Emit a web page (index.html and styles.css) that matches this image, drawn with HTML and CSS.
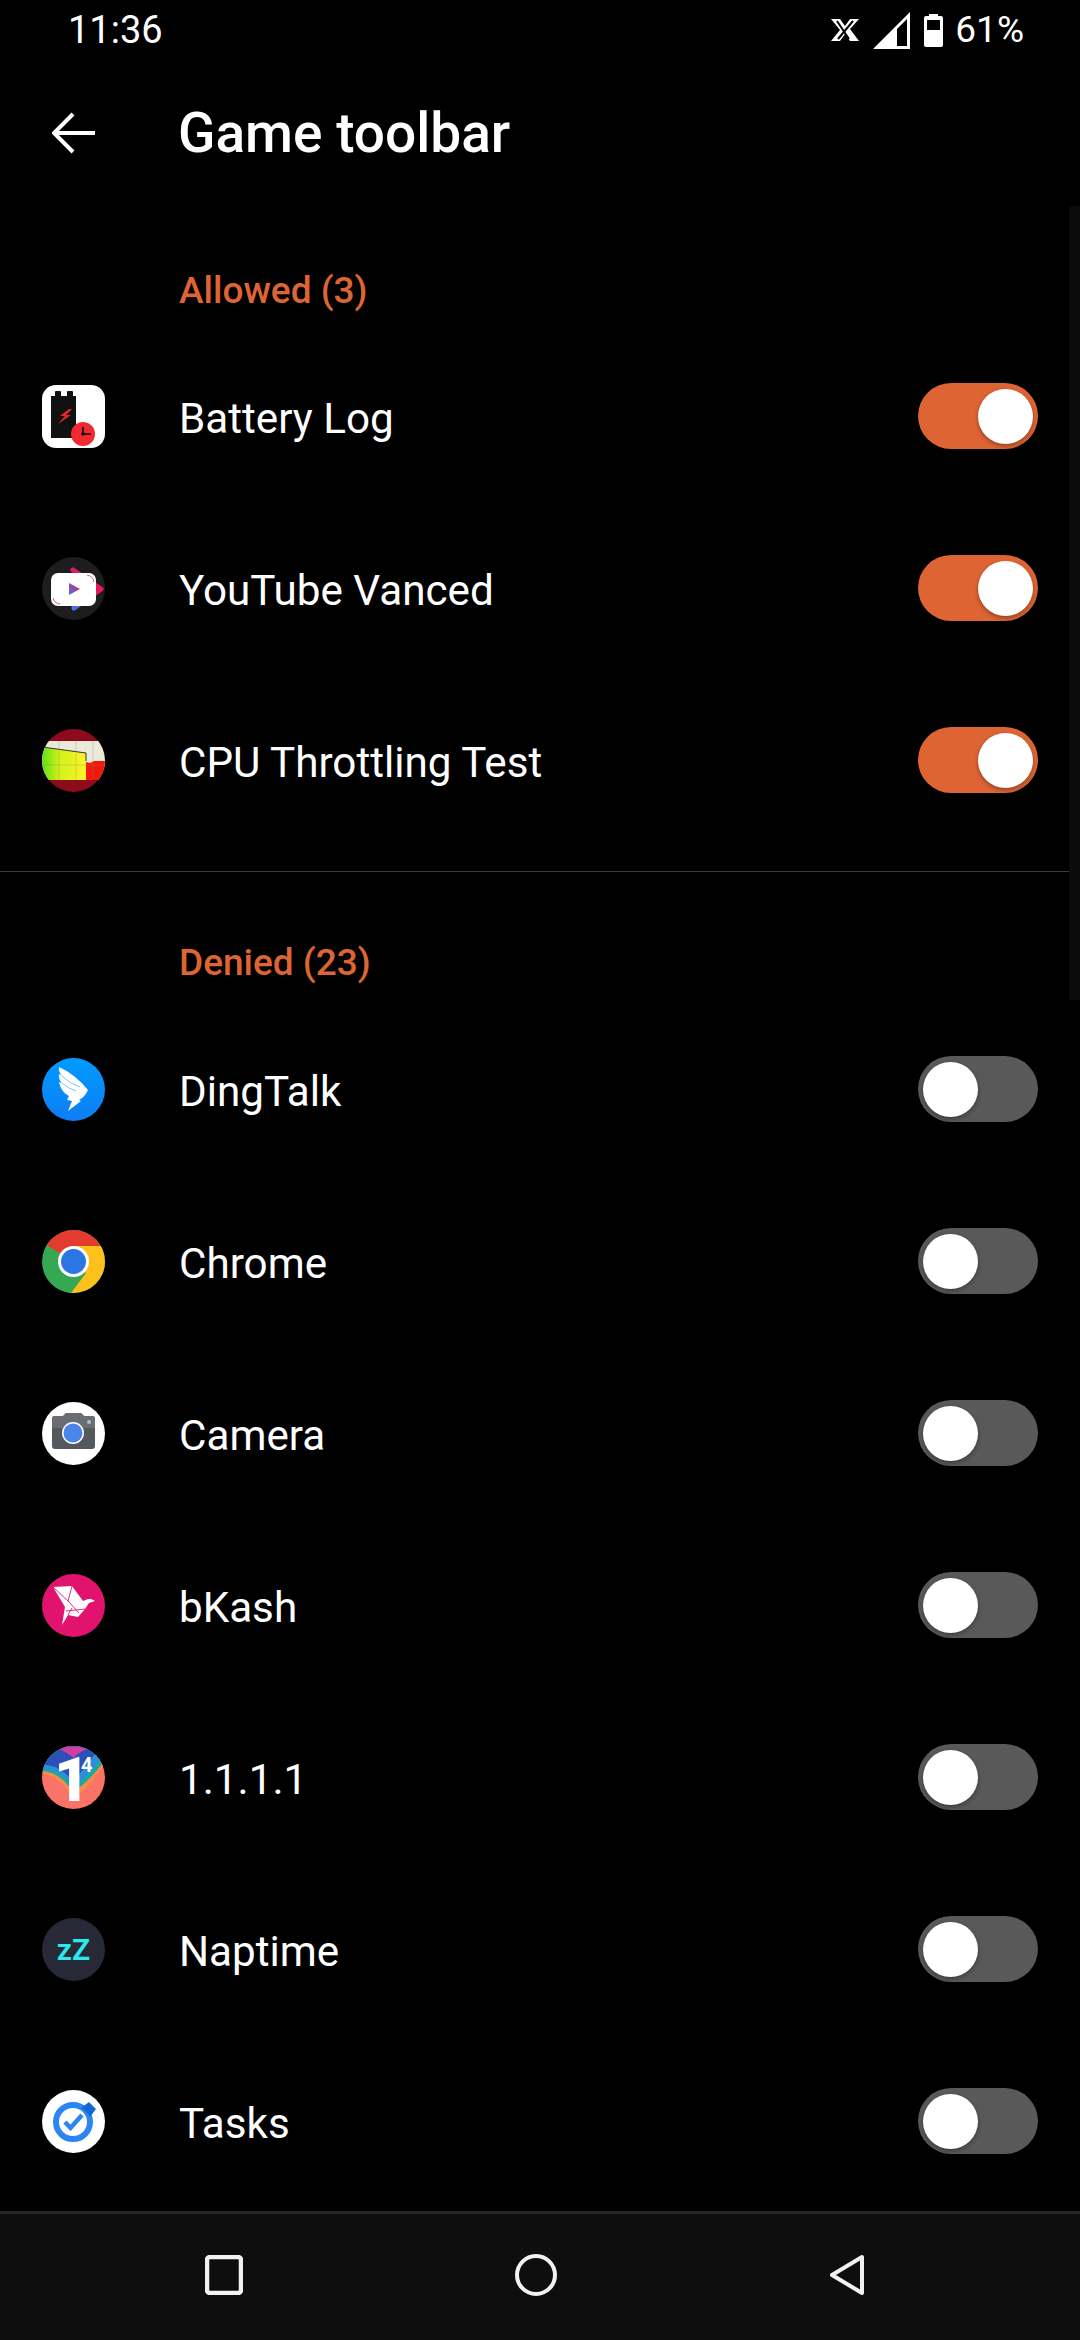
FILE: index.html
```html
<!DOCTYPE html>
<html lang="en">
<head>
  <meta charset="UTF-8">
  <title>Game toolbar</title>
  <meta name="viewport" content="width=device-width, initial-scale=1.0">
  <link rel="stylesheet" href="styles.css">
</head>
<body>
  <div class="phone">
    <div class="status-bar">
      <span class="clock">11:36</span>
      <div class="status-icons">
        <svg class="st-x" width="30" height="24" viewBox="0 0 30 24">
          <path d="M1 1h9l5 7 5-7h9l-9 10 9 12h-9l-5-7-5 7H1l9-11z" fill="#fff"/>
          <path d="M7 3l12 18M23 3L8 21" stroke="#000" stroke-width="2" fill="none"/>
        </svg>
        <svg class="st-signal" width="38" height="37" viewBox="0 0 38 37">
          <path d="M37 0v37H0z" fill="#fff"/>
          <path d="M24 17l10-10v27H24z" fill="#000"/>
        </svg>
        <svg class="st-battery" width="19" height="34" viewBox="0 0 19 34">
          <path d="M5 3V1h9v2h3a2 2 0 0 1 2 2v27a2 2 0 0 1-2 2H2a2 2 0 0 1-2-2V5a2 2 0 0 1 2-2z" fill="#fff"/>
          <rect x="3" y="7" width="13" height="10" fill="#000"/>
        </svg>
        <span class="pct">61%</span>
      </div>
    </div>

    <header class="app-bar">
      <svg class="back" width="44" height="42" viewBox="0 0 44 42">
        <path d="M43 21H3M21 2L2 21l19 19" stroke="#fff" stroke-width="4" fill="none"/>
      </svg>
      <h1>Game toolbar</h1>
    </header>

    <main class="list">
      <div class="scroll-thumb"></div>
      <h2 class="section-title allowed-title">Allowed (3)</h2>

      <div class="row">
        <svg class="app-icon" viewBox="0 0 63 63">
          <rect width="63" height="63" rx="14" fill="#fff"/>
          <path d="M13 11V7a1 1 0 0 1 1-1h4a1 1 0 0 1 1 1v4h6V7a1 1 0 0 1 1-1h4a1 1 0 0 1 1 1v4h3v42H9V11z" fill="#111"/>
          <path d="M27 24l-9 7h5l-7 8 13-9h-5l6-6z" fill="#e8262c"/>
          <circle cx="41" cy="49" r="12" fill="#f02a2e"/>
          <path d="M41 42v7h8" stroke="#111" stroke-width="1.6" fill="none"/>
          <circle cx="41" cy="49" r="1.8" fill="#111"/>
        </svg>
        <span class="app-name">Battery Log</span>
        <span class="switch on"><span class="knob"></span></span>
      </div>
      <div class="row">
        <svg class="app-icon" viewBox="0 0 63 63">
          <defs>
            <linearGradient id="vancedGrad" gradientUnits="userSpaceOnUse" x1="31" y1="52" x2="52" y2="30">
              <stop offset="0" stop-color="#3f7de8"/>
              <stop offset="0.5" stop-color="#a5369a"/>
              <stop offset="1" stop-color="#e5185a"/>
            </linearGradient>
            <linearGradient id="vancedPlay" x1="0" y1="1" x2="1" y2="0">
              <stop offset="0" stop-color="#3f7de8"/>
              <stop offset="1" stop-color="#e5185a"/>
            </linearGradient>
          </defs>
          <circle cx="31.5" cy="31.5" r="31.5" fill="#1d1d20"/>
          <path d="M31 13l28 19-27 19" stroke="url(#vancedGrad)" stroke-width="5" stroke-linecap="round" stroke-linejoin="round" fill="none"/>
          <rect x="9" y="16" width="45" height="33" rx="7" fill="#fff"/>
          <path d="M27 26l11 6-11 6z" fill="url(#vancedPlay)"/>
          <path d="M45 18q6 1 7 7M11 41q1 5 7 6" stroke="#d8336e" stroke-width="0.8" fill="none"/>
        </svg>
        <span class="app-name">YouTube Vanced</span>
        <span class="switch on"><span class="knob"></span></span>
      </div>
      <div class="row">
        <svg class="app-icon" viewBox="0 0 63 63">
          <defs>
            <clipPath id="cpuClip"><circle cx="31.5" cy="31.5" r="31.5"/></clipPath>
            <linearGradient id="cpuGreen" x1="0" y1="0" x2="1" y2="0">
              <stop offset="0" stop-color="#5fe01a"/>
              <stop offset="0.4" stop-color="#d2f21a"/>
              <stop offset="1" stop-color="#fdf42a"/>
            </linearGradient>
          </defs>
          <g clip-path="url(#cpuClip)">
            <rect width="63" height="63" fill="#8c0b1c"/>
            <rect y="12" width="63" height="39" fill="#ece9d8"/>
            <path d="M0 18l44 6v27H0z" fill="url(#cpuGreen)"/>
            <path d="M44 33l4 1 4-2 11 0v19H44z" fill="#f21a0a"/>
            <path d="M0 18l44 6v8" stroke="#333" stroke-width="1" fill="none"/>
            <path d="M17 12v39M34 12v39M51 12v39M0 36h63" stroke="#8a8a60" stroke-width="0.5" opacity="0.6"/>
          </g>
        </svg>
        <span class="app-name">CPU Throttling Test</span>
        <span class="switch on"><span class="knob"></span></span>
      </div>

      <hr class="divider">

      <h2 class="section-title denied-title">Denied (23)</h2>

      <div class="row">
        <svg class="app-icon" viewBox="0 0 63 63">
          <defs>
            <linearGradient id="dingGrad" x1="0" y1="0" x2="0" y2="1">
              <stop offset="0" stop-color="#009cff"/>
              <stop offset="1" stop-color="#0d7df5"/>
            </linearGradient>
          </defs>
          <circle cx="31.5" cy="31.5" r="31.5" fill="url(#dingGrad)"/>
          <path d="M17 9Q33 16 46 32 43 39 37 42l2 1-13 10 4-10-5-1 2-4Q19 34 17 24l3 1Q16 21 17 16l3 2Q16 13 17 9z" fill="#fff"/>
          <path d="M20 18q8 8 18 11M20 25q7 6 14 8" stroke="#6dbdfc" stroke-width="0.9" fill="none"/>
        </svg>
        <span class="app-name">DingTalk</span>
        <span class="switch"><span class="knob"></span></span>
      </div>
      <div class="row">
        <svg class="app-icon" viewBox="0 0 63 63">
          <defs><clipPath id="chromeClip"><circle cx="31.5" cy="31.5" r="31.5"/></clipPath></defs>
          <g clip-path="url(#chromeClip)">
            <rect width="63" height="63" fill="#34a853"/>
            <path d="M31.5 31.5L4 15V-2h59v18H31.5z" fill="#e33b2e"/>
            <path d="M31.5 16H63v47H22z" fill="#fcc11a"/>
            <path d="M31.5 31.5L4 15 0 63h29l15-20z" fill="#34a853"/>
          </g>
          <circle cx="31.5" cy="31.5" r="15.5" fill="#fff"/>
          <circle cx="31.5" cy="31.5" r="12.5" fill="#2a76e4"/>
        </svg>
        <span class="app-name">Chrome</span>
        <span class="switch"><span class="knob"></span></span>
      </div>
      <div class="row">
        <svg class="app-icon" viewBox="0 0 63 63">
          <circle cx="31.5" cy="31.5" r="31.5" fill="#fff"/>
          <path d="M10 17a3 3 0 0 1 3-3h8l3-3h15l3 3h8a3 3 0 0 1 3 3v27a3 3 0 0 1-3 3H13a3 3 0 0 1-3-3z" fill="#55585d"/>
          <path d="M10 26v-9a3 3 0 0 1 3-3h8l3-3h15l3 3h8a3 3 0 0 1 3 3v9z" fill="#6a6d72"/>
          <circle cx="47" cy="20" r="2" fill="#b5b8bc"/>
          <circle cx="31" cy="31" r="11" fill="#fff"/>
          <circle cx="31" cy="31" r="9.500" fill="#4a86ea"/>
        </svg>
        <span class="app-name">Camera</span>
        <span class="switch"><span class="knob"></span></span>
      </div>
      <div class="row">
        <svg class="app-icon" viewBox="0 0 63 63">
          <circle cx="31.5" cy="31.5" r="31.5" fill="#e2136e"/>
          <path d="M11 13l19-1 11 15 5-2 3 0 4 2-6 2-4 6-7 8-10-2-6 10 3-18z" fill="#fff"/>
          <path d="M30 12l-4 15 11 12M26 27L11 13M24 37l19-2M26 41l4-7" stroke="#e2136e" stroke-width="0.9" fill="none"/>
        </svg>
        <span class="app-name">bKash</span>
        <span class="switch"><span class="knob"></span></span>
      </div>
      <div class="row">
        <div class="warp-icon">
          <svg class="app-icon" viewBox="0 0 63 63">
            <defs><clipPath id="warpClip"><circle cx="31.5" cy="31.5" r="31.5"/></clipPath></defs>
            <g clip-path="url(#warpClip)">
              <rect width="63" height="63" fill="#f97366"/>
              <path d="M36 63q18-4 27-22v22z" fill="#f9a62c"/>
              <path d="M0 28q18 2 31 24 19-12 32-34V0H0z" fill="#f98a4a"/>
              <path d="M0 25q18 1 31 21 17-11 32-32V0H0z" fill="#1aa7a5"/>
              <path d="M0 23q18-1 31 19 15-12 32-34V0H0z" fill="#2a8fdc"/>
              <path d="M0 19q18-1 31 17 13-16 25-32V0H0z" fill="#2d4fb8"/>
              <path d="M16 2q14-4 30 1-10 3-14 9-8-6-16-10z" fill="#d03ea0"/>
            </g>
          </svg>
          <span class="warp-one">1</span>
          <span class="warp-four">4</span>
        </div>
        <span class="app-name">1.1.1.1</span>
        <span class="switch"><span class="knob"></span></span>
      </div>
      <div class="row">
        <div class="nap-icon">zZ</div>
        <span class="app-name">Naptime</span>
        <span class="switch"><span class="knob"></span></span>
      </div>
      <div class="row">
        <svg class="app-icon" viewBox="0 0 63 63">
          <circle cx="31.5" cy="31.5" r="31.5" fill="#fff"/>
          <circle cx="31" cy="32" r="17" fill="none" stroke="#2b86f2" stroke-width="6"/>
          <path d="M23 32l5.500 6L40 25" stroke="#2b86f2" stroke-width="4.500" fill="none"/>
          <path d="M39 18l8-6 7 7-6 8q-3-6-9-9z" fill="#1667d6"/>
        </svg>
        <span class="app-name">Tasks</span>
        <span class="switch"><span class="knob"></span></span>
      </div>
    </main>

    <nav class="nav-bar">
      <svg width="38" height="40" viewBox="0 0 38 40">
        <rect x="2" y="2" width="34" height="36" rx="3" stroke="#f2f2f2" stroke-width="4.500" fill="none"/>
      </svg>
      <svg width="42" height="42" viewBox="0 0 42 42">
        <circle cx="21" cy="21" r="19" stroke="#f2f2f2" stroke-width="4" fill="none"/>
      </svg>
      <svg width="36" height="42" viewBox="0 0 36 42">
        <path d="M33 3v36L3 21z" stroke="#f2f2f2" stroke-width="4" stroke-linejoin="round" fill="none"/>
      </svg>
    </nav>
  </div>
</body>
</html>
```

FILE: styles.css
```css
* { box-sizing: border-box; }
html, body { margin: 0; padding: 0; background: #000; }
body { font-family: Roboto, "Noto Sans", sans-serif; color: #fff; }

.phone { width: 1080px; height: 2340px; display: flex; flex-direction: column; overflow: hidden; background: #000; }

.status-bar { height: 60px; flex: none; display: flex; align-items: center; justify-content: space-between; padding: 0 56px 0 68px; }
.clock { font-size: 38px; line-height: 60px; }
.status-icons { display: flex; align-items: center; }
.st-x { margin-right: 13px; }
.st-signal { margin-right: 13px; }
.st-battery { margin-right: 12px; }
.pct { font-size: 37px; line-height: 60px; }

.app-bar { height: 146px; flex: none; display: flex; align-items: center; padding-left: 52px; }
.app-bar h1 { margin: 0 0 0 82px; font-size: 55px; font-weight: 500; }

.list { flex: 1; min-height: 0; overflow: hidden; position: relative; }
.scroll-thumb { position: absolute; top: -6px; right: 0; width: 11px; height: 800px; background: #0b0b0b; }
.section-title { margin: 0; font-size: 37px; font-weight: 500; color: #de6433; padding-left: 179px; }
.allowed-title { height: 124px; line-height: 170px; }
.denied-title { height: 131px; line-height: 182px; }

.row { height: 172px; display: flex; align-items: center; padding: 0 42px; }
.app-icon { width: 63px; height: 63px; flex: none; display: block; }
.app-name { flex: 1; margin-left: 74px; font-size: 42.2px; position: relative; top: 2px; }

.switch { width: 120px; height: 66px; flex: none; border-radius: 33px; background: #595959; display: flex; align-items: center; padding: 0 5px; }
.switch.on { background: #de6433; justify-content: flex-end; }
.knob { width: 55px; height: 55px; border-radius: 50%; background: #fff; box-shadow: 0 2px 4px rgba(0, 0, 0, 0.35); }

.divider { height: 1px; margin: 25px 0 0; border: none; background: #3a3a3a; }

.warp-icon { width: 63px; height: 63px; flex: none; position: relative; color: #fff; }
.warp-one { position: absolute; left: 12px; top: 11px; font-size: 62px; line-height: 46px; font-weight: 900; letter-spacing: -11px; }
.warp-four { position: absolute; left: 39px; top: 9px; font-size: 20px; line-height: 20px; font-weight: 700; }

.nap-icon { width: 63px; height: 63px; flex: none; border-radius: 50%; background: #272a36; color: #2ce8f0; font-size: 30px; font-weight: 600; line-height: 63px; text-align: center; }

.nav-bar { height: 129px; flex: none; display: flex; align-items: center; gap: 272px; background: #0e0e0e; border-top: 3px solid #262626; padding: 0 0 5px 205px; }
```
